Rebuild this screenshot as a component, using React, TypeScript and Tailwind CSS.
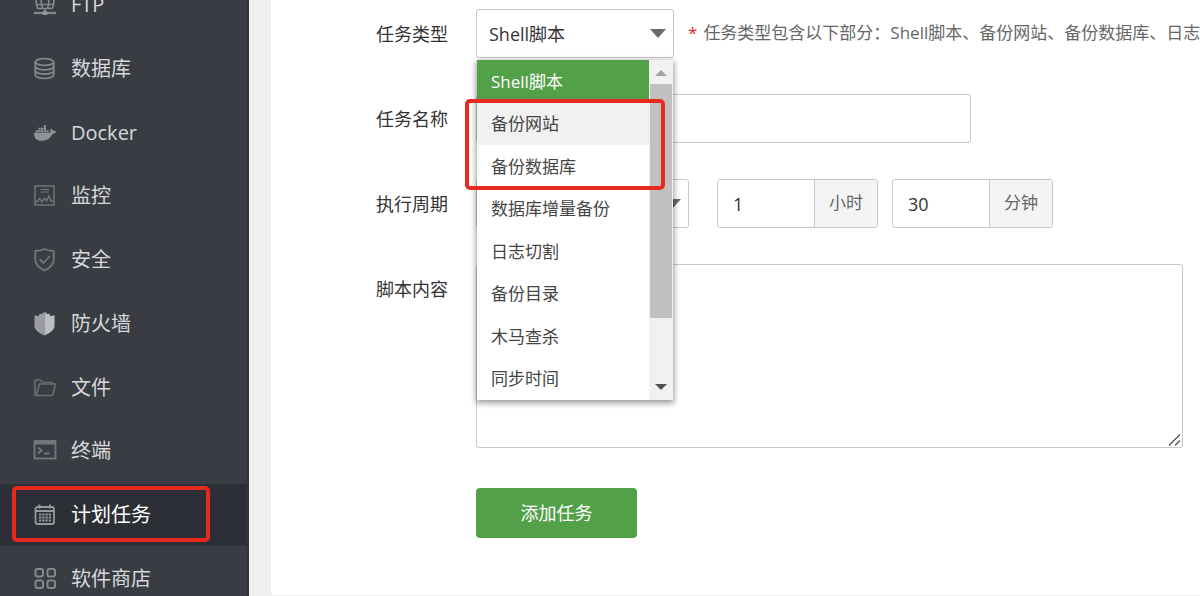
import React, { useState } from "react";
import clsx from "clsx";
import { FaDocker } from "react-icons/fa";

const iconClass = "w-6 h-6 shrink-0";

const FtpIcon = () => (
  <svg viewBox="0 0 24 24" className={iconClass} fill="none" stroke="#84888c" strokeWidth="1.6">
    <path d="M5 15.5C2.500 12 2.500 6 5 2h14c2.500 4 2.500 10 0 13.500z" />
    <path d="M9.500 2c-1.500 4-1.500 9.500 0 13.500M14.500 2c1.500 4 1.500 9.500 0 13.500M3.500 6h17M3.500 11.500h17" />
    <path d="M12 16v3" />
    <path d="M1 20h22" strokeWidth="2.2" />
    <rect x="9.500" y="18" width="5" height="4" rx="1" fill="#94989b" stroke="none" />
  </svg>
);

const DatabaseIcon = () => (
  <svg viewBox="0 0 24 24" className={iconClass} fill="none" stroke="#84888c" strokeWidth="1.8">
    <ellipse cx="11.500" cy="5" rx="9.200" ry="3.400" />
    <path d="M2.300 5v13c0 1.900 4.100 3.400 9.200 3.400s9.200-1.500 9.200-3.400V5" />
    <path d="M2.300 9.400c0 1.900 4.100 3.400 9.200 3.400s9.200-1.500 9.200-3.400M2.300 13.800c0 1.900 4.100 3.400 9.200 3.400s9.200-1.500 9.200-3.400" />
  </svg>
);

const DockerIcon = () => (
  <span className="flex w-6 h-6 shrink-0 items-center justify-center text-[#8f9396]">
    <FaDocker className="w-[22px] h-[18px]" />
  </span>
);

const MonitorIcon = () => (
  <svg viewBox="0 0 24 24" className={iconClass} fill="none" stroke="#73777b" strokeWidth="1.4">
    <rect x="2" y="2" width="19" height="19" />
    <path d="M7.500 5.500h8.500M7.500 8h8.500" strokeWidth="1" />
    <path d="M2 17.500h2.500l2-3 2.500 3.500 2.500-3.500 2 2.500 2.500-5 2 5h3" />
  </svg>
);

const ShieldIcon = () => (
  <svg viewBox="0 0 24 24" className={iconClass} fill="none" stroke="#73777b" strokeWidth="1.8" strokeLinejoin="round">
    <path d="M11.500 1c2.500 1.400 5.700 2 9.200 2v8.500c0 5-4 8.500-9.200 11-5.200-2.500-9.200-6-9.200-11V3c3.500 0 6.700-.6 9.200-2z" />
    <path d="M6.500 11l4 4 6.500-7" />
  </svg>
);

const FirewallIcon = () => (
  <svg viewBox="0 0 24 24" className={iconClass}>
    <path d="M11.500 0.500H9.500V2H7.500V1.500L6 2.500V4H4V3.500H1.500V14c0 4 4.500 7 10 9.500z" fill="#9b9d9f" />
    <path d="M11.500 0.500h2V2h2V1.500L17 2.500V4h2V3.500h2.500V14c0 4-4.500 7-10 9.500z" fill="#bdbfc1" />
  </svg>
);

const FolderIcon = () => (
  <svg viewBox="0 0 24 24" className={iconClass} fill="none" stroke="#676b70" strokeWidth="1.7" strokeLinejoin="round">
    <path d="M3 19.500c-.6 0-1-.5-1-1V5c0-.7.400-1 1-1h4.500l2 2.500h9.500c.7 0 1 .3 1 1V8" />
    <path d="M6.500 8H22.500l-2.500 10.500c-.2.700-.5 1-1.200 1H3.200z" />
  </svg>
);

const TerminalIcon = () => (
  <svg viewBox="0 0 24 24" className={iconClass} fill="none" stroke="#73777b" strokeWidth="1.8">
    <rect x="1.500" y="2" width="21" height="17.500" />
    <path d="M1 3.500h22" strokeWidth="4" />
    <path d="M5 8.500l3.500 3-3.500 3M11 14.500h5.500" />
  </svg>
);

const CalendarIcon = () => (
  <svg viewBox="0 0 24 24" className={iconClass} fill="none" stroke="#96999c" strokeWidth="1.8">
    <rect x="2.500" y="4" width="18.500" height="17" rx="2" />
    <path d="M2.500 8h18.500M6.500 1.500v4M17 1.500v4" />
    <path d="M6 11.500h12M6 14.500h12M6 17.500h12" strokeWidth="2" strokeDasharray="2.300 0.930" />
  </svg>
);

const StoreIcon = () => (
  <svg viewBox="0 0 24 24" className={iconClass} fill="none" stroke="#84888c" strokeWidth="2">
    <rect x="2.500" y="2" width="7.500" height="7.500" rx="2" />
    <rect x="14.500" y="2" width="7.500" height="7.500" rx="2" />
    <rect x="2.500" y="13.500" width="7.500" height="7.500" rx="2" />
    <rect x="14.500" y="13.500" width="7.500" height="7.500" rx="2" />
  </svg>
);

const menu = [
  { title: "FTP", icon: FtpIcon },
  { title: "数据库", icon: DatabaseIcon },
  { title: "Docker", icon: DockerIcon },
  { title: "监控", icon: MonitorIcon },
  { title: "安全", icon: ShieldIcon },
  { title: "防火墙", icon: FirewallIcon },
  { title: "文件", icon: FolderIcon },
  { title: "终端", icon: TerminalIcon },
  { title: "计划任务", icon: CalendarIcon, active: true },
  { title: "软件商店", icon: StoreIcon },
];

const taskTypes = ["Shell脚本", "备份网站", "备份数据库", "数据库增量备份", "日志切割", "备份目录", "木马查杀", "同步时间"];

const fieldClass = "h-[49px] rounded-[3px] border border-[#c8c8c8] bg-white text-lg text-[#333]";

const Caret = () => (
  <svg viewBox="0 0 16 9" className="pointer-events-none absolute right-2 top-5 w-4 h-[9px]">
    <path d="M0 0h16L8 9z" fill="#6b6b6b" />
  </svg>
);

const Sidebar = () => (
  <nav className="w-[249px] h-screen shrink-0 overflow-hidden border-r-2 border-[#31353a] bg-[#393d43]">
    <ul className="-mt-[26px] grid h-[636px] auto-rows-fr gap-px">
      {menu.map(({ title, icon: Icon, active }) => (
        <li key={title} className={clsx("relative", active && "bg-[#2c2f35]")}>
          <a
            href="#"
            className={clsx("flex h-full items-center gap-[14px] pl-[33px] text-xl", active ? "text-white" : "text-[#d6d8da]")}
          >
            <Icon />
            {title}
          </a>
          {active && (
            <span className="pointer-events-none absolute bottom-1 left-3 top-0.5 w-[198px] rounded-[5px] border-4 border-[#e8291f]" />
          )}
        </li>
      ))}
    </ul>
  </nav>
);

interface FormRowProps {
  label: string;
  htmlFor: string;
  children: React.ReactNode;
}

const FormRow: React.FC<FormRowProps> = ({ label, htmlFor, children }) => (
  <div className="flex gap-7">
    <label htmlFor={htmlFor} className="w-[177px] h-[49px] shrink-0 text-right text-lg leading-[51px] text-[#333]">
      {label}
    </label>
    {children}
  </div>
);

interface UnitInputProps {
  id: string;
  unit: string;
  value: string;
  onChange: (value: string) => void;
}

const UnitInput: React.FC<UnitInputProps> = ({ id, unit, value, onChange }) => (
  <div className="flex h-[49px] w-[161px] overflow-hidden rounded-[3px] border border-[#c8c8c8] text-lg text-[#333]">
    <input
      id={id}
      aria-label={unit}
      className="min-w-0 flex-1 bg-white pl-[15px] outline-none"
      value={value}
      onChange={(e) => onChange(e.target.value)}
    />
    <span className="flex w-[63px] items-center justify-center border-l border-[#c8c8c8] bg-[#f4f4f4] text-[17px] text-[#666]">
      {unit}
    </span>
  </div>
);

interface TypeMenuProps {
  selected: string;
  onSelect: (type: string) => void;
}

const TypeMenu: React.FC<TypeMenuProps> = ({ selected, onSelect }) => (
  <div className="absolute left-px right-px top-[51px] z-10 flex h-[340px] bg-white shadow-[0_2px_6px_1px_rgba(0,0,0,0.4)]">
    <ul role="listbox" className="grid flex-1 auto-rows-fr">
      {taskTypes.map((type, index) => (
        <li
          key={type}
          role="option"
          aria-selected={type === selected}
          onClick={() => onSelect(type)}
          className={clsx(
            "flex cursor-pointer items-center pl-[14px] text-[17px]",
            type === selected ? "bg-[#52a048] text-white" : "text-[#444]",
            type !== selected && index === 1 && "bg-[#f1f1f1]"
          )}
        >
          {type}
        </li>
      ))}
    </ul>
    {/* scrollbar */}
    <div className="flex w-6 flex-col bg-[#f1f1f1]">
      <svg viewBox="0 0 24 24" className="w-6 h-6">
        <path d="M6 16h12l-6-6z" fill="#a3a3a3" />
      </svg>
      <div className="mx-px h-[234px] bg-[#c1c1c1]" />
      <svg viewBox="0 0 24 24" className="mt-auto w-6 h-6">
        <path d="M6 8h12l-6 6z" fill="#505050" />
      </svg>
    </div>
    <span className="pointer-events-none absolute -left-3 right-2 top-[39px] h-[91px] rounded-[5px] border-4 border-[#e8291f]" />
  </div>
);

export default function App() {
  const [type, setType] = useState("Shell脚本");
  const [name, setName] = useState("");
  const [hour, setHour] = useState("1");
  const [minute, setMinute] = useState("30");
  const [script, setScript] = useState("");

  return (
    <div className="flex h-screen overflow-hidden bg-[#f0f0f0] font-['Open_Sans','Noto_Sans_CJK_SC',sans-serif]">
      <Sidebar />
      <main className="min-w-0 flex-1 pl-[22px]">
        <form
          className="flex flex-col gap-9 rounded-bl-[4px] bg-white pb-[57px] pt-[9px]"
          onSubmit={(e) => e.preventDefault()}
        >
          <FormRow label="任务类型" htmlFor="type">
            <div className="relative w-[198px] shrink-0">
              <select
                id="type"
                className={clsx(fieldClass, "w-full appearance-none pl-3 outline-none")}
                value={type}
                onChange={(e) => setType(e.target.value)}
              >
                {taskTypes.map((item) => (
                  <option key={item}>{item}</option>
                ))}
              </select>
              <Caret />
              <TypeMenu selected={type} onSelect={setType} />
            </div>
            <p className="-ml-3.5 flex gap-1.5 whitespace-nowrap text-[17px] leading-[47px] text-[#666]">
              <span className="text-[#e8291f]">*</span>
              任务类型包含以下部分：Shell脚本、备份网站、备份数据库、日志
            </p>
          </FormRow>

          <FormRow label="任务名称" htmlFor="name">
            <input
              id="name"
              className={clsx(fieldClass, "w-[495px] px-3 outline-none")}
              value={name}
              onChange={(e) => setName(e.target.value)}
            />
          </FormRow>

          <FormRow label="执行周期" htmlFor="cycle">
            <div className="relative w-[213px] shrink-0">
              <select id="cycle" className={clsx(fieldClass, "w-full appearance-none pl-3 outline-none")}>
                <option>每天</option>
              </select>
              <Caret />
            </div>
            <div className="flex gap-[14px]">
              <UnitInput id="hour" unit="小时" value={hour} onChange={setHour} />
              <UnitInput id="minute" unit="分钟" value={minute} onChange={setMinute} />
            </div>
          </FormRow>

          <FormRow label="脚本内容" htmlFor="script">
            <div className="relative mr-[17px] flex-1">
              <textarea
                id="script"
                className="block h-[184px] w-full resize-none rounded-[3px] border border-[#c8c8c8] bg-white p-3 text-lg text-[#333] outline-none"
                value={script}
                onChange={(e) => setScript(e.target.value)}
              />
              <svg viewBox="0 0 14 14" className="absolute bottom-px right-px w-[14px] h-[14px]" stroke="#555" strokeWidth="1.300">
                <path d="M1 12.500L12 1.500M7 12.500l5-5" />
              </svg>
            </div>
          </FormRow>

          <div className="mt-1 pl-[205px]">
            <button type="submit" className="h-[50px] w-[161px] rounded-[4px] bg-[#52a048] text-lg text-white">
              添加任务
            </button>
          </div>
        </form>
      </main>
    </div>
  );
}
